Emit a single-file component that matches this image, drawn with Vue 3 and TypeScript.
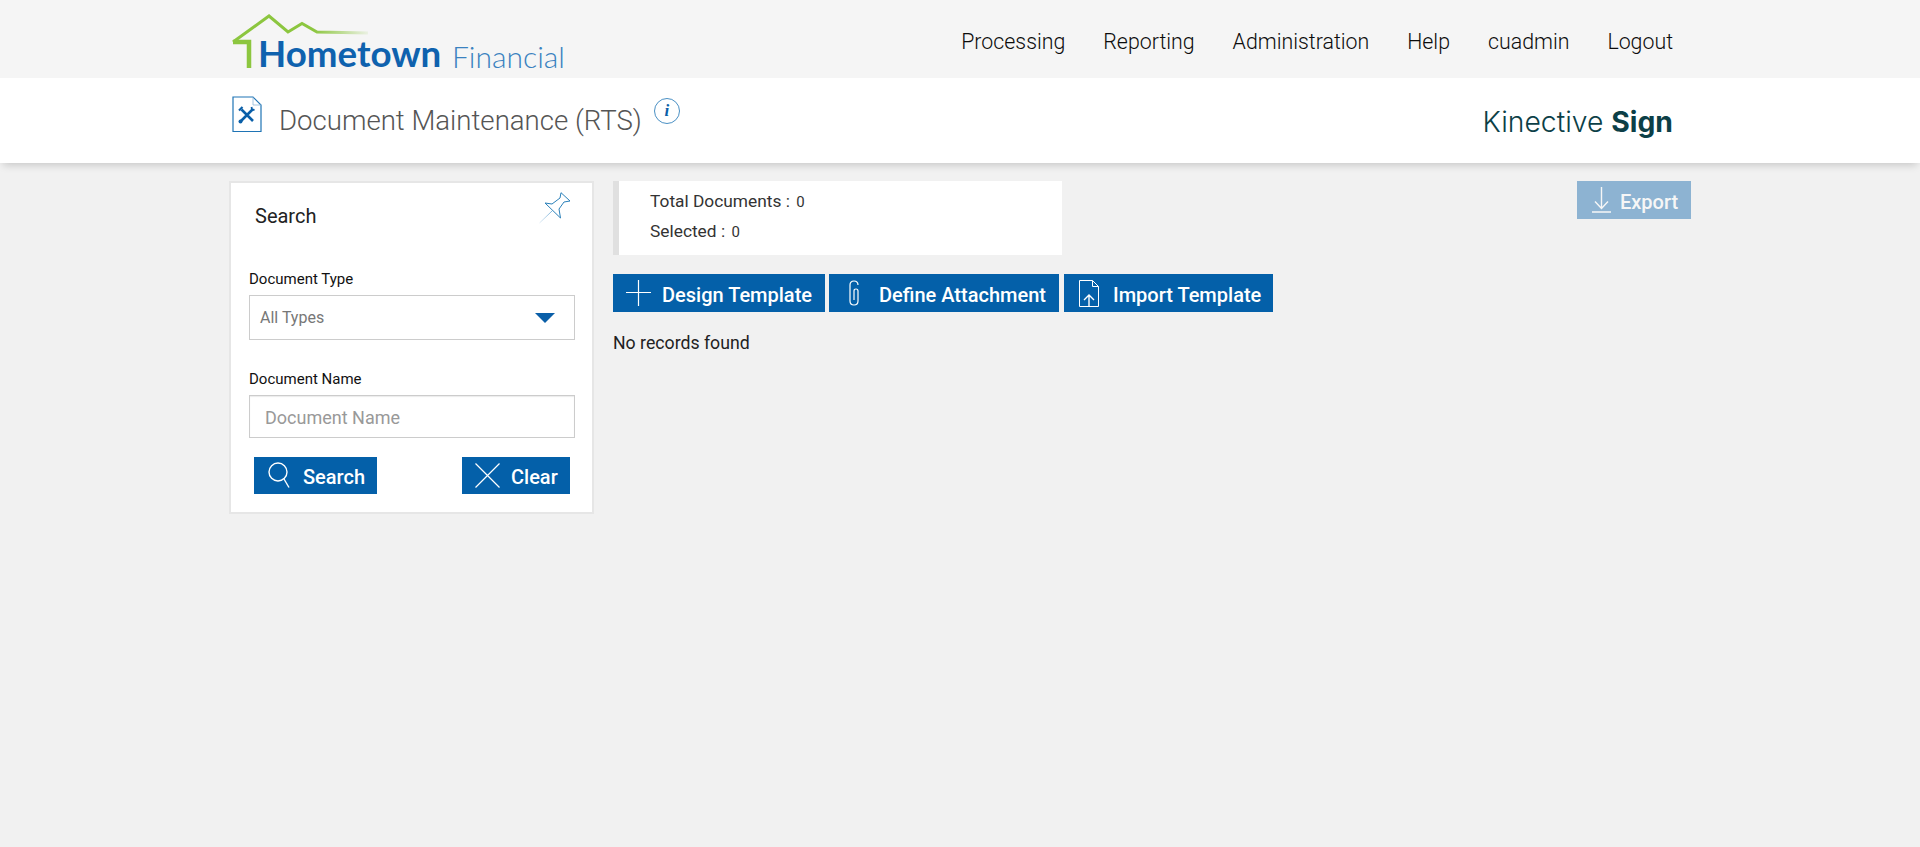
<script setup lang="ts">
const navItems: string[] = ['Processing', 'Reporting', 'Administration', 'Help', 'cuadmin', 'Logout']
</script>

<template>
  <div class="page">
    <header class="topbar">
      <div class="logo">
        <svg class="logo-house" width="146" height="60" viewBox="0 0 146 60" fill="none">
          <defs>
            <linearGradient id="roofFade" gradientUnits="userSpaceOnUse" x1="0" y1="0" x2="136" y2="0">
              <stop offset="0.6" stop-color="#8cc63f" />
              <stop offset="1" stop-color="#8cc63f" stop-opacity="0.1" />
            </linearGradient>
          </defs>
          <path d="M1 30 L37 4 L56 20 L70 11.5 L85 20 Q110 20.5 136 21" stroke="url(#roofFade)" stroke-width="3" />
          <path d="M1 30 L17 30 L17 56" stroke="#8cc63f" stroke-width="4.5" />
        </svg>
        <span class="logo-main">Hometown</span>
        <span class="logo-sub">Financial</span>
      </div>
      <nav class="nav">
        <a v-for="item in navItems" :key="item">{{ item }}</a>
      </nav>
    </header>

    <section class="subbar">
      <div class="title-wrap">
        <svg class="doc-icon" width="30" height="37" viewBox="0 0 30 37" fill="none">
          <path d="M1 1 H21 L29 9 V35.5 H1 Z" fill="#fff" stroke="#1f74b5" stroke-width="1.2" />
          <path d="M21 1 V9 H29" stroke="#8fb8d8" stroke-width="0.8" />
          <path d="M9.5 13.5 L21 25 M9 25 L20.5 13.5" stroke="#0a5fa8" stroke-width="2.6" />
          <path d="M7 14.5 L10.5 11" stroke="#0a5fa8" stroke-width="2.2" />
          <circle cx="8.5" cy="25.5" r="2" fill="#0a5fa8" />
          <path d="M19.5 11 L20 13.5 L22.5 14" stroke="#0a5fa8" stroke-width="1.8" />
        </svg>
        <h1 class="title">Document Maintenance (RTS)</h1>
        <span class="info-badge">i</span>
      </div>
      <div class="brand">Kinective <b>Sign</b></div>
    </section>

    <main class="content">
      <aside class="panel">
        <div class="panel-head">
          <h2>Search</h2>
          <svg class="pin" width="32" height="32" viewBox="0 0 32 32" fill="none">
            <defs>
              <linearGradient id="needle" gradientUnits="userSpaceOnUse" x1="13" y1="19" x2="0" y2="31">
                <stop offset="0" stop-color="#7fb4da" />
                <stop offset="1" stop-color="#e4eef6" />
              </linearGradient>
            </defs>
            <path d="M22 0.7 L31 9 L25 10 L20 17 L21.5 26 L6 11 L13 12 L21 6 Z" fill="#fff" stroke="#2a80b9" stroke-width="1" />
            <path d="M13 19 L0.5 31" stroke="url(#needle)" stroke-width="1" />
          </svg>
        </div>
        <label class="field-label">Document Type</label>
        <div class="select">
          <span>All Types</span>
          <i class="caret"></i>
        </div>
        <label class="field-label second">Document Name</label>
        <input class="text-input" type="text" placeholder="Document Name" />
        <div class="panel-actions">
          <button class="btn search-btn" type="button">
            <svg width="24" height="27" viewBox="0 0 24 27" fill="none" stroke="#fff" stroke-width="1.4">
              <circle cx="10" cy="10" r="9" />
              <path d="M16 17 L21 25.5" />
            </svg>
            <span class="lbl">Search</span>
          </button>
          <button class="btn clear-btn" type="button">
            <svg width="25" height="25" viewBox="0 0 25 25" fill="none" stroke="#fff" stroke-width="1.2">
              <path d="M0.5 0.5 L24.5 24.5 M24.5 0.5 L0.5 24.5" />
            </svg>
            <span class="lbl">Clear</span>
          </button>
        </div>
      </aside>

      <div class="results">
        <div class="results-top">
          <div class="summary">
            <div>Total Documents : <small>0</small></div>
            <div>Selected : <small>0</small></div>
          </div>
          <button class="btn export" type="button">
            <svg width="19" height="26" viewBox="0 0 19 26" fill="none" stroke="#fff" stroke-width="1.4">
              <path d="M9.5 0 V21 M3 14.5 L9.5 21.5 L16 14.5 M0 25 H19" />
            </svg>
            <span class="lbl">Export</span>
          </button>
        </div>
        <div class="actions">
          <button class="btn design" type="button">
            <svg width="25" height="26" viewBox="0 0 25 26" fill="none" stroke="#fff" stroke-width="1.2">
              <path d="M12.5 0 V26 M0 12.5 H25" />
            </svg>
            <span class="lbl">Design Template</span>
          </button>
          <button class="btn attach" type="button">
            <svg width="10" height="26" viewBox="0 0 10 26" fill="none" stroke="#fff" stroke-width="1.2">
              <path d="M9 5 Q9 1 5 1 Q1 1 1 5 V21 Q1 25 5 25 Q9 25 9 21 V11 Q9 9 7 9 Q5 9 5 11 V20" />
            </svg>
            <span class="lbl">Define Attachment</span>
          </button>
          <button class="btn import" type="button">
            <svg width="20" height="27" viewBox="0 0 20 27" fill="none" stroke="#fff" stroke-width="1">
              <path d="M0.5 0.5 H13.5 L19.5 6.5 V26.5 H0.5 Z M13.5 0.5 V6.5 H19.5" />
              <path d="M10 26 V15 M5 20 L10 15 L15 20" stroke-width="1.4" />
            </svg>
            <span class="lbl">Import Template</span>
          </button>
        </div>
        <p class="empty">No records found</p>
      </div>
    </main>
  </div>
</template>

<style>
html, body { margin: 0; background: #f1f1f1; }
</style>

<style scoped>
.page {
  min-height: 847px;
  background: #f1f1f1;
  font-family: Roboto, "Liberation Sans", sans-serif;
  color: #222;
}
.topbar {
  height: 78px;
  background: #f5f5f5;
  padding: 0 247px 0 232px;
  display: flex;
  justify-content: space-between;
  align-items: center;
}
.logo { position: relative; width: 340px; height: 78px; }
.logo-house { position: absolute; left: 0; top: 12px; }
.logo-main {
  position: absolute; left: 26px; top: 31px;
  font: 700 36.7px/44px Lato, sans-serif;
  color: #0f62ae;
}
.logo-sub {
  position: absolute; left: 220px; top: 36px;
  font: 300 30px/40px Lato, sans-serif;
  color: #3a82c0;
}
.nav { display: flex; gap: 38px; margin-top: 5px; }
.nav a { font-size: 21.33px; font-weight: 300; color: #0c0c0c; }
.subbar {
  height: 85px;
  background: #fff;
  box-shadow: 0 5px 8px -3px rgba(0, 0, 0, 0.18);
  padding: 0 247px 0 232px;
  display: flex;
  justify-content: space-between;
  position: relative;
}
.title-wrap { display: flex; align-items: flex-start; padding-top: 18px; }
.title {
  margin: 8px 0 0 17px;
  font-size: 27.6px; line-height: 34px; font-weight: 300; color: #555;
}
.info-badge {
  width: 26px; height: 26px; margin: 2px 0 0 12px;
  box-sizing: border-box;
  border: 1px solid #4a90c4; border-radius: 50%;
  color: #0a5fa8;
  font: italic 700 17px/24px "Liberation Serif", serif;
  text-align: center;
}
.brand {
  font: 300 28.3px/34px Inter, sans-serif;
  color: #0c3f47;
  margin-top: 27px;
}
.brand b { font-weight: 700; }
.content {
  display: flex;
  gap: 19px;
  padding: 18px 229px 0;
  align-items: flex-start;
}
.panel {
  width: 365px;
  height: 333px;
  box-sizing: border-box;
  background: #fff;
  border: 2px solid #e6e6e6;
  padding: 0 17px 0 18px;
  flex: none;
}
.panel-head { display: flex; justify-content: space-between; height: 63px; padding: 9px 4px 0 5px; box-sizing: border-box; }
.panel-head h2 { margin: 10px 0 0 1px; font-size: 20px; line-height: 28px; font-weight: 400; color: #222; }
.field-label { display: block; font-size: 15px; line-height: 20px; color: #111; margin: 23px 0 6px; }
.field-label.second { margin-top: 29px; }
.select {
  height: 45px; box-sizing: border-box;
  border: 1px solid #ccc;
  display: flex; align-items: center; justify-content: space-between;
  padding: 0 19px 0 10px;
  font-size: 16px; color: #777;
}
.caret { width: 0; height: 0; border-left: 10px solid transparent; border-right: 10px solid transparent; border-top: 10px solid #0a5fa8; }
.text-input {
  display: block; width: 100%; height: 43px; box-sizing: border-box;
  border: 1px solid #ccc;
  box-shadow: inset 0 1px 1px rgba(0,0,0,0.08);
  padding: 2px 15px 0;
  font: 18px Roboto, sans-serif;
  outline: none;
}
.text-input::placeholder { color: #999; opacity: 1; }
.panel-actions { display: flex; justify-content: space-between; padding: 19px 5px 0; }
.btn {
  height: 38px; border: 0; margin: 0;
  background: #0460a9; color: #fff;
  font: 500 20px Roboto, sans-serif;
  display: inline-flex; align-items: center;
  white-space: nowrap;
}
.lbl { margin-top: 3px; }
.search-btn { width: 123px; height: 37px; padding: 0 0 0 14px; gap: 11px; }
.clear-btn { width: 108px; height: 37px; padding: 0 0 0 13px; gap: 11px; }
.results { flex: 1; min-width: 0; }
.results-top { display: flex; justify-content: space-between; align-items: flex-start; }
.summary {
  width: 449px; height: 74px; box-sizing: border-box;
  background: #fff;
  border-left: 6px solid #e0e0e0;
  padding: 5px 0 0 31px;
  font-size: 17.33px; line-height: 30px; color: #333;
}
.summary > div + div { margin-top: -1px; }
.summary small { font-size: 15px; margin-left: 2px; }
.export { width: 114px; padding: 0 0 0 15px; gap: 9px; opacity: 0.42; }
.actions { display: flex; gap: 4px; margin-top: 19px; }
.design { width: 212px; padding: 0 0 0 13px; gap: 11px; }
.attach { width: 230px; padding: 0 0 0 20px; gap: 20px; }
.import { width: 209px; margin-left: 1px; padding: 0 0 0 15px; gap: 14px; }
.empty { margin: 18px 0 0; font-size: 17.7px; line-height: 26px; color: #222; }
</style>
